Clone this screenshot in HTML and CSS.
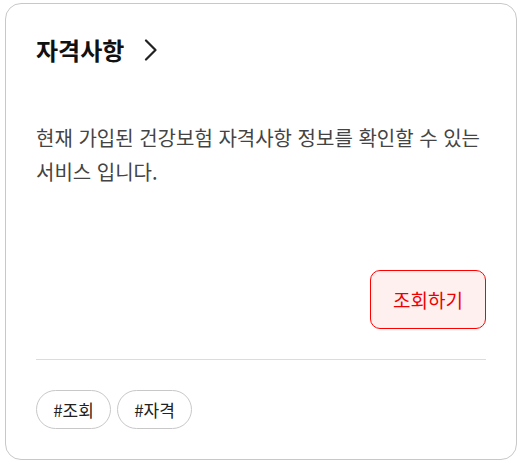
FILE: index.html
```html
<!DOCTYPE html>
<html lang="ko">
<head>
    <meta charset="UTF-8">
    <meta name="viewport" content="width=device-width, initial-scale=1.0">
    <title>자격사항</title>
    <link rel="stylesheet" href="styles.css">
</head>
<body>
    <section class="card">
        <a class="card-title" href="#">
            <h2>자격사항</h2>
            <svg width="14" height="22" viewBox="0 0 14 22" fill="none">
                <path d="M2 1.5 L11.5 11 L2 20.5" stroke="#222" stroke-width="2.2" stroke-linecap="round" stroke-linejoin="round"/>
            </svg>
        </a>

        <p class="card-desc">현재 가입된 건강보험 자격사항 정보를 확인할 수 있는 서비스 입니다.</p>

        <div class="card-action">
            <button>조회하기</button>
        </div>

        <ul class="tags">
            <li>#조회</li>
            <li>#자격</li>
        </ul>
    </section>
</body>
</html>
```

FILE: styles.css
```css
body{
    margin: 0;
    padding: 3px 10px 8px 5px;
    font-family: "Noto Sans CJK KR", "Noto Sans", sans-serif;
    background-color: #fff;
}

.card{
    display: flex;
    flex-direction: column;
    width: 512px;
    height: 457px;
    box-sizing: border-box;
    border: 1px solid #c8c8c8;
    border-radius: 16px;
    padding: 30px 30px 0 30px;
}

.card-title{
    display: flex;
    align-items: center;
    gap: 20px;
    height: 32px;
    text-decoration: none;
    color: #111;

    h2{
        margin: 0;
        font-size: 24px;
        font-weight: 700;
        line-height: 32px;
    }
}

.card-desc{
    margin: 55px 0 0;
    font-size: 20px;
    line-height: 34px;
    color: #444;
    word-break: keep-all;
}

.card-action{
    display: flex;
    justify-content: flex-end;
    margin-top: auto;
    padding-bottom: 30px;
    border-bottom: 1px solid #dcdcdc;

    button{
        width: 116px;
        height: 59px;
        border: 1px solid #f00;
        border-radius: 10px;
        background-color: #fff0f0;
        color: #e00;
        font-family: inherit;
        font-size: 19px;
        cursor: pointer;
    }
}

.tags{
    display: flex;
    gap: 6px;
    list-style: none;
    margin: 0;
    padding: 30px 0 30px;

    li{
        display: flex;
        align-items: center;
        justify-content: center;
        width: 75px;
        height: 39px;
        box-sizing: border-box;
        border: 1px solid #c8c8c8;
        border-radius: 99px;
        font-size: 17px;
        color: #222;
    }
}
```
